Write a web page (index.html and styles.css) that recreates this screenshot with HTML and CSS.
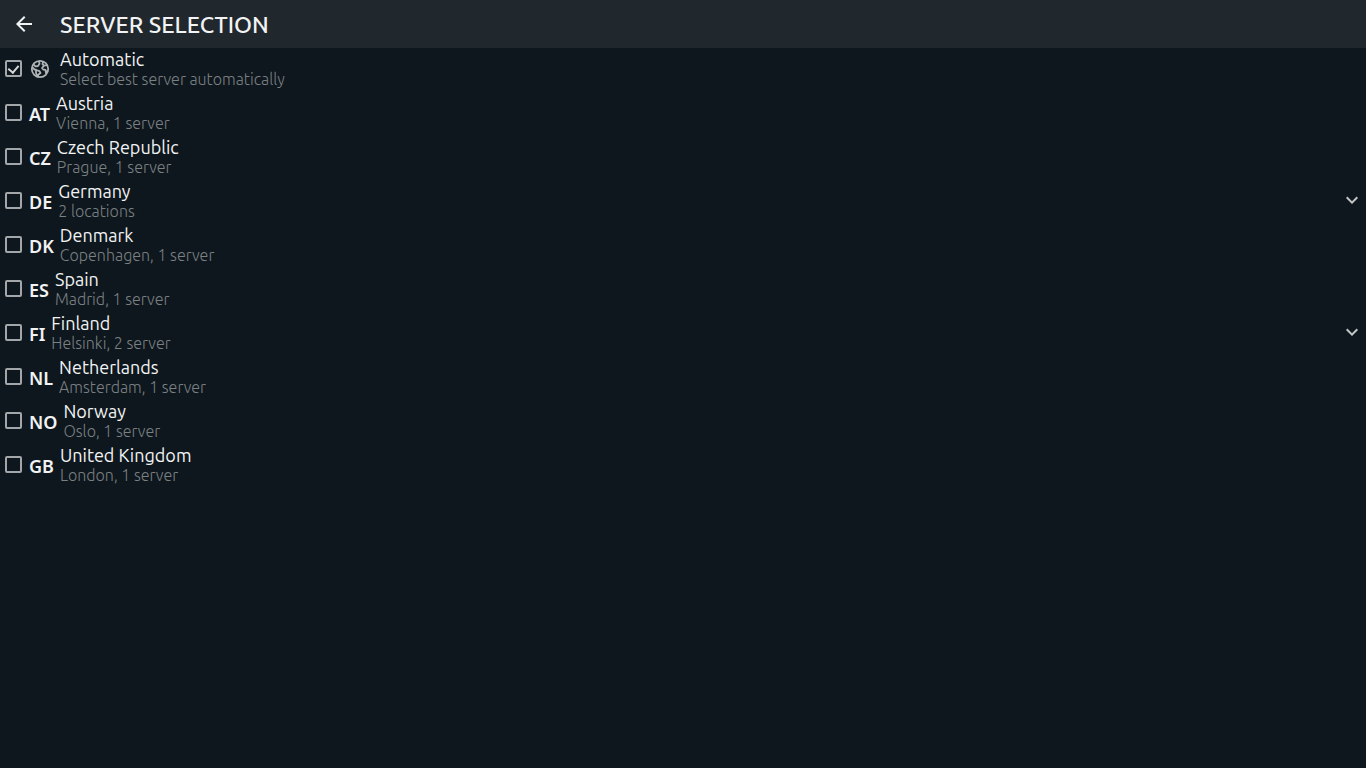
FILE: index.html
```html
<!DOCTYPE html>
<html lang="en">
<head>
    <meta charset="UTF-8">
    <meta name="viewport" content="width=device-width, initial-scale=1.0">
    <title>Server selection</title>
    <link rel="stylesheet" href="styles.css">
</head>
<body>
    <header class="header">
        <button class="back" type="button" aria-label="Back">
            <svg width="24" height="24" viewBox="0 0 24 24"><path fill="currentColor" d="M20 11H7.83l5.59-5.59L12 4l-8 8 8 8 1.41-1.41L7.83 13H20z"/></svg>
        </button>
        <h1 class="title">SERVER SELECTION</h1>
    </header>
    <ul class="servers">
        <li class="server">
            <label class="choice auto">
                <input class="check" type="checkbox" checked>
                <svg class="globe" width="20" height="20" viewBox="0 0 20 20" fill="none" stroke="currentColor" stroke-width="1.8" stroke-linejoin="round">
                    <circle cx="10" cy="10" r="8.2"/>
                    <path d="M3.500 5.500l2 1.800 2.500-.3 1.500-2.200L9 2M2 8l2.500 2.500 2 .2"/>
                    <path d="M6 11l3.500 1.200 1 1.800-2 1.500L7.500 17.500 6 14z"/>
                    <path d="M13 2.800l-.5 2.400 1.500 1.500-2 2.300 1.200 1.500 2.300.3.500 3.200 1.800-2.500M14 6.700l3.500-.5"/>
                </svg>
                <span class="text"><span class="name">Automatic</span><span class="place">Select best server automatically</span></span>
            </label>
        </li>
        <li class="server">
            <label class="choice">
                <input class="check" type="checkbox">
                <span class="code">AT</span>
                <span class="text"><span class="name">Austria</span><span class="place">Vienna, 1 server</span></span>
            </label>
        </li>
        <li class="server">
            <label class="choice">
                <input class="check" type="checkbox">
                <span class="code">CZ</span>
                <span class="text"><span class="name">Czech Republic</span><span class="place">Prague, 1 server</span></span>
            </label>
        </li>
        <li class="server">
            <label class="choice">
                <input class="check" type="checkbox">
                <span class="code">DE</span>
                <span class="text"><span class="name">Germany</span><span class="place">2 locations</span></span>
            </label>
            <button class="expand" type="button" aria-label="Show locations in Germany">
                <svg width="24" height="24" viewBox="0 0 24 24"><path fill="currentColor" d="M7.410 8.590L12 13.170l4.590-4.580L18 10l-6 6-6-6z"/></svg>
            </button>
        </li>
        <li class="server">
            <label class="choice">
                <input class="check" type="checkbox">
                <span class="code">DK</span>
                <span class="text"><span class="name">Denmark</span><span class="place">Copenhagen, 1 server</span></span>
            </label>
        </li>
        <li class="server">
            <label class="choice">
                <input class="check" type="checkbox">
                <span class="code">ES</span>
                <span class="text"><span class="name">Spain</span><span class="place">Madrid, 1 server</span></span>
            </label>
        </li>
        <li class="server">
            <label class="choice">
                <input class="check" type="checkbox">
                <span class="code">FI</span>
                <span class="text"><span class="name">Finland</span><span class="place">Helsinki, 2 server</span></span>
            </label>
            <button class="expand" type="button" aria-label="Show locations in Finland">
                <svg width="24" height="24" viewBox="0 0 24 24"><path fill="currentColor" d="M7.410 8.590L12 13.170l4.590-4.580L18 10l-6 6-6-6z"/></svg>
            </button>
        </li>
        <li class="server">
            <label class="choice">
                <input class="check" type="checkbox">
                <span class="code">NL</span>
                <span class="text"><span class="name">Netherlands</span><span class="place">Amsterdam, 1 server</span></span>
            </label>
        </li>
        <li class="server">
            <label class="choice">
                <input class="check" type="checkbox">
                <span class="code">NO</span>
                <span class="text"><span class="name">Norway</span><span class="place">Oslo, 1 server</span></span>
            </label>
        </li>
        <li class="server">
            <label class="choice">
                <input class="check" type="checkbox">
                <span class="code">GB</span>
                <span class="text"><span class="name">United Kingdom</span><span class="place">London, 1 server</span></span>
            </label>
        </li>
    </ul>
</body>
</html>
```
FILE: styles.css
```css
*{
    box-sizing: border-box;
}
body{
    margin: 0;
    min-height: 100vh;
    background-color: #0e171d;
    color: #f2f3f4;
    font-family: Ubuntu, "Noto Sans", sans-serif;
}
button{
    display: flex;
    align-items: center;
    justify-content: center;
    padding: 0;
    border: 0;
    background: none;
    color: inherit;
    cursor: pointer;
}
.header{
    display: flex;
    align-items: center;
    height: 48px;
    background-color: #20282e;
}
.back{
    width: 48px;
    height: 48px;
}
.title{
    margin: 0 12px;
    padding-top: 2px;
    font-size: 23px;
    line-height: 28px;
    font-weight: 500;
}
.servers{
    margin: 0;
    padding: 0;
    list-style: none;
}
.server{
    display: flex;
    height: 44px;
}
.choice{
    display: flex;
    flex: 1;
    align-items: center;
    gap: 6px;
    padding-left: 5px;
    cursor: pointer;
}
.auto{
    gap: 8px;
}
.check{
    display: grid;
    place-items: center;
    appearance: none;
    flex: none;
    width: 17px;
    height: 17px;
    margin: 0 0 3px;
    border: 2px solid #a3a7a9;
    border-radius: 2px;
}
/* the tick */
.check:checked::after{
    content: "";
    width: 5px;
    height: 8px;
    margin-bottom: 2px;
    border: solid #d4d7d8;
    border-width: 0 2px 2px 0;
    transform: rotate(40deg);
}
.globe{
    margin-bottom: 3px;
    color: #b0b4b6;
}
.auto .text{
    margin-left: 2px;
}
.code{
    padding-left: 1px;
    font-family: "Noto Sans", sans-serif;
    font-size: 18px;
    line-height: 24px;
    font-weight: 600;
}
.text{
    display: flex;
    flex-direction: column;
    padding-bottom: 2px;
}
.name{
    font-size: 18px;
    line-height: 20px;
}
.place{
    color: #7b8083;
    font-size: 16px;
    line-height: 20px;
    font-weight: 300;
}
.expand{
    width: 28px;
    padding-bottom: 4px;
    color: #c3c6c8;
}
```
